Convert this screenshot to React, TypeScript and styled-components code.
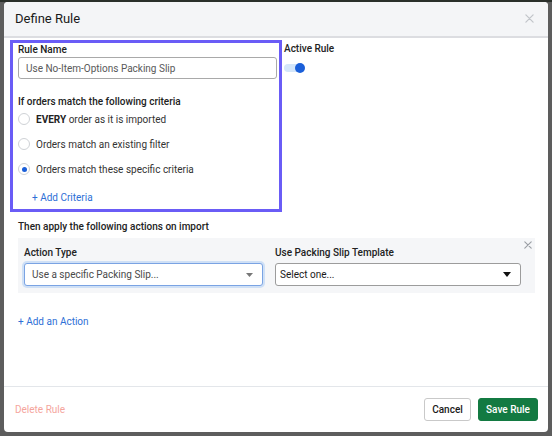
import styled, { createGlobalStyle } from 'styled-components';

const GlobalStyle = createGlobalStyle`
  html, body {
    margin: 0;
    padding: 0;
    background: #5d5d5d;
  }
  * {
    box-sizing: border-box;
  }
  body {
    font-family: Roboto, "Liberation Sans", Arial, sans-serif;
    color: #333;
  }
`;

const Backdrop = styled.div`
  width: 552px;
  height: 436px;
  padding: 2px 4px 4px 4px;
  background: linear-gradient(#2a2f2a, #2a2f2a) top / 100% 2px no-repeat, #5d5d5d;
`;

const Modal = styled.div`
  width: 544px;
  height: 430px;
  background: #fff;
  border-radius: 4px;
  display: flex;
  flex-direction: column;
  overflow: hidden;
`;

const Header = styled.div`
  height: 36px;
  flex: none;
  background: #f4f5f7;
  border-bottom: 2px solid #dcdde1;
  display: flex;
  align-items: center;
  justify-content: space-between;
  padding: 0 14px 2px 11px;
`;

const Title = styled.h1`
  margin: 0;
  font-size: 13px;
  font-weight: 400;
  color: #1a1a1a;
`;

const CloseButton = styled.button<{ $size: number; $color: string }>`
  border: 0;
  background: none;
  padding: 0;
  width: ${p => p.$size}px;
  height: ${p => p.$size}px;
  display: flex;
  color: ${p => p.$color};
  cursor: pointer;
`;

const Body = styled.div`
  flex: 1;
  padding: 2px 0 0 0;
`;

const TopRow = styled.div`
  display: flex;
  gap: 2px;
  padding-left: 6px;
`;

const Highlight = styled.div`
  width: 272px;
  border: 3px solid #6a5cf6;
  padding: 0 2px 4px 5px;
`;

const Label = styled.div<{ $top?: number }>`
  font-size: 10px;
  line-height: 14px;
  font-weight: 500;
  color: #222;
  margin-top: ${p => p.$top ?? 0}px;
`;

const TextInput = styled.div`
  height: 22px;
  border: 1px solid #a9a9a9;
  border-radius: 3px;
  display: flex;
  align-items: center;
  padding-left: 7px;
  font-size: 10px;
  color: #595959;
`;

const RadioList = styled.div`
  display: flex;
  flex-direction: column;
  gap: 5px;
`;

const RadioRow = styled.label`
  height: 20px;
  display: flex;
  align-items: center;
  gap: 6px;
  font-size: 10px;
  color: #333;
`;

const RadioCircle = styled.span<{ $checked?: boolean }>`
  width: 12px;
  height: 12px;
  border-radius: 50%;
  border: 1px solid #cfd2d6;
  background: #fff;
  display: flex;
  align-items: center;
  justify-content: center;
  flex: none;
  &::after {
    content: '';
    width: 5px;
    height: 5px;
    border-radius: 50%;
    background: ${p => (p.$checked ? '#1b5fd9' : 'transparent')};
  }
`;

const Strong = styled.b`
  font-weight: 700;
  color: #222;
`;

const LinkButton = styled.button<{ $indent?: number; $top?: number }>`
  border: 0;
  background: none;
  padding: 0;
  margin-left: ${p => p.$indent ?? 0}px;
  margin-top: ${p => p.$top ?? 0}px;
  font-family: inherit;
  font-size: 10px;
  line-height: 14px;
  color: #2e6fd6;
  text-align: left;
  cursor: pointer;
`;

const SideColumn = styled.div`
  padding-top: 2px;
  display: flex;
  flex-direction: column;
  align-items: flex-start;
`;

const Toggle = styled.div`
  margin-top: 7px;
  width: 21px;
  height: 10px;
  position: relative;
  display: flex;
  align-items: center;
  &::before {
    content: '';
    width: 20px;
    height: 8px;
    border-radius: 4px;
    background: #d4e6fa;
  }
  &::after {
    content: '';
    position: absolute;
    right: 0;
    top: 0;
    width: 10px;
    height: 10px;
    border-radius: 50%;
    background: #1b5fd9;
  }
`;

const Section = styled.div`
  padding: 0 13px 0 14px;
`;

const ActionBox = styled.div`
  position: relative;
  margin-top: 4px;
  background: #f5f6f8;
  padding: 8px 14px 7px 6px;
  display: grid;
  grid-template-columns: 239px 1fr;
  column-gap: 12px;
`;

const BoxClose = styled.div`
  position: absolute;
  top: 3px;
  right: 3px;
`;

const Field = styled.div`
  display: flex;
  flex-direction: column;
  gap: 3px;
`;

const Select = styled.div<{ $focused?: boolean }>`
  height: 23px;
  border-radius: 3px;
  border: 1px solid ${p => (p.$focused ? '#7aa3e3' : '#9c9c9c')};
  box-shadow: ${p => (p.$focused ? '0 0 0 2px #cfe0f6' : 'none')};
  background: #fff;
  display: flex;
  align-items: center;
  justify-content: space-between;
  padding: 0 9px 0 ${p => (p.$focused ? 7 : 4)}px;
  font-size: 10px;
  color: ${p => (p.$focused ? '#4a4a4a' : '#1a1a1a')};
`;

const Footer = styled.div`
  flex: none;
  height: 46px;
  border-top: 1px solid #e3e6ea;
  display: flex;
  align-items: center;
  justify-content: space-between;
  padding: 0 10px 0 11px;
`;

const DeleteLink = styled.button`
  border: 0;
  background: none;
  padding: 0;
  font-family: inherit;
  font-size: 10px;
  color: #f5a59d;
  cursor: pointer;
`;

const ButtonGroup = styled.div`
  display: flex;
  gap: 7px;
`;

const Button = styled.button<{ $primary?: boolean; $width: number }>`
  width: ${p => p.$width}px;
  height: 23px;
  border-radius: 3px;
  font-family: inherit;
  font-size: 10px;
  font-weight: 500;
  border: 1px solid ${p => (p.$primary ? '#137a42' : '#c9c9c9')};
  background: ${p => (p.$primary ? '#137a42' : '#fff')};
  color: ${p => (p.$primary ? '#fff' : '#1a1a1a')};
  padding: 0;
  cursor: pointer;
`;

function XIcon({ size, color }: { size: number; color: string }) {
  return (
    <CloseButton $size={size} $color={color} aria-label="Close">
      <svg width={size} height={size} viewBox="0 0 10 10">
        <path d="M1 1L9 9M9 1L1 9" stroke="currentColor" strokeWidth="1.4" strokeLinecap="round" />
      </svg>
    </CloseButton>
  );
}

function Caret({ color, w, h }: { color: string; w: number; h: number }) {
  return (
    <svg width={w} height={h} viewBox={`0 0 ${w} ${h}`}>
      <path d={`M0 0H${w}L${w / 2} ${h}Z`} fill={color} />
    </svg>
  );
}

const criteria = [
  { key: 'every', checked: false },
  { key: 'filter', checked: false, text: 'Orders match an existing filter' },
  { key: 'specific', checked: true, text: 'Orders match these specific criteria' },
];

export default function App() {
  return (
    <>
      <GlobalStyle />
      <Backdrop>
        <Modal>
          <Header>
            <Title>Define Rule</Title>
            <XIcon size={9} color="#c3c6cb" />
          </Header>
          <Body>
            <TopRow>
              <Highlight>
                <Label>Rule Name</Label>
                <TextInput>Use No-Item-Options Packing Slip</TextInput>
                <Label $top={16}>If orders match the following criteria</Label>
                <RadioList>
                  {criteria.map(c => (
                    <RadioRow key={c.key}>
                      <RadioCircle $checked={c.checked} />
                      {c.text ?? (
                        <span>
                          <Strong>EVERY</Strong> order as it is imported
                        </span>
                      )}
                    </RadioRow>
                  ))}
                </RadioList>
                <LinkButton $indent={14} $top={12}>+ Add Criteria</LinkButton>
              </Highlight>
              <SideColumn>
                <Label>Active Rule</Label>
                <Toggle />
              </SideColumn>
            </TopRow>
            <Section>
              <Label $top={8}>Then apply the following actions on import</Label>
              <ActionBox>
                <BoxClose>
                  <XIcon size={8} color="#9a9ea4" />
                </BoxClose>
                <Field>
                  <Label>Action Type</Label>
                  <Select $focused>
                    Use a specific Packing Slip...
                    <Caret color="#777" w={7} h={4} />
                  </Select>
                </Field>
                <Field>
                  <Label>Use Packing Slip Template</Label>
                  <Select>
                    Select one...
                    <Caret color="#111" w={8} h={5} />
                  </Select>
                </Field>
              </ActionBox>
              <LinkButton $top={22}>+ Add an Action</LinkButton>
            </Section>
          </Body>
          <Footer>
            <DeleteLink>Delete Rule</DeleteLink>
            <ButtonGroup>
              <Button $width={47}>Cancel</Button>
              <Button $primary $width={60}>Save Rule</Button>
            </ButtonGroup>
          </Footer>
        </Modal>
      </Backdrop>
    </>
  );
}
